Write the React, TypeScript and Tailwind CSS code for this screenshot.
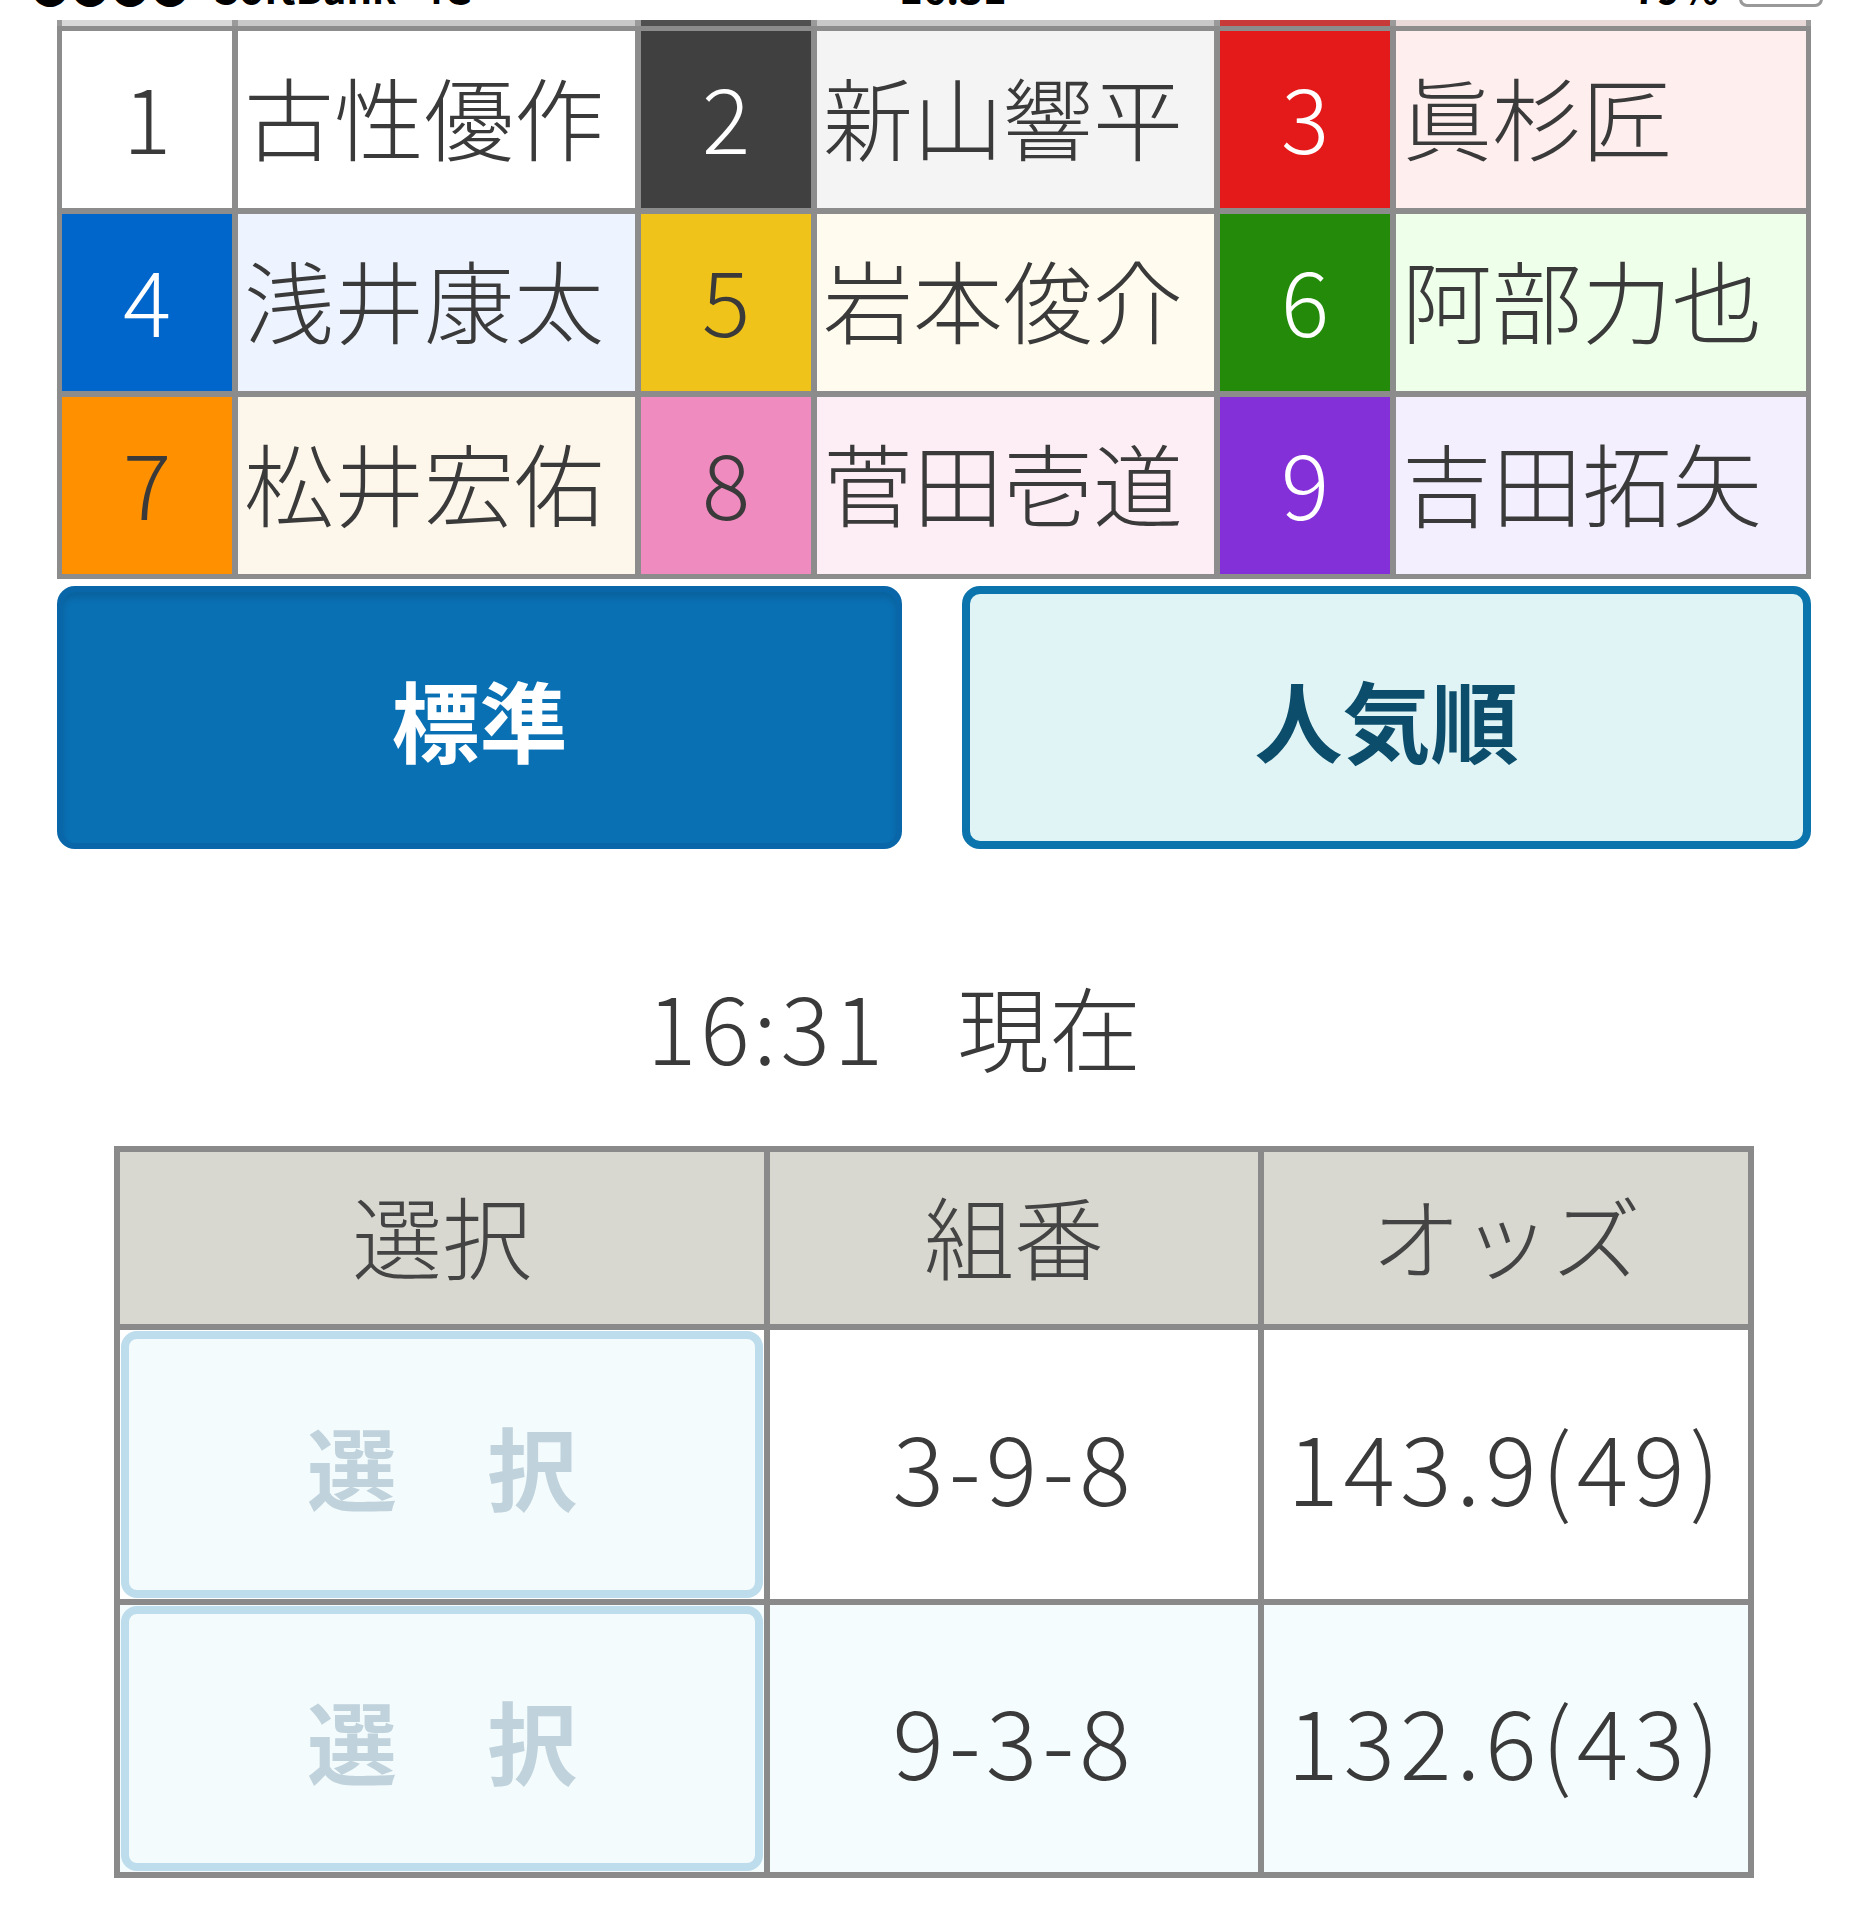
import React from "react";

type Racer = { no: string; name: string; numCls: string; nameCls: string };

const racers: Racer[] = [
  { no: "1", name: "古性優作", numCls: "bg-white text-[#3a3a3a]", nameCls: "bg-white" },
  { no: "2", name: "新山響平", numCls: "bg-[#404040] text-white", nameCls: "bg-[#f4f4f4]" },
  { no: "3", name: "眞杉匠", numCls: "bg-[#e41a1a] text-white", nameCls: "bg-[#ffeeee]" },
  { no: "4", name: "浅井康太", numCls: "bg-[#0066cc] text-white", nameCls: "bg-[#eef4ff]" },
  { no: "5", name: "岩本俊介", numCls: "bg-[#f0c31a] text-[#3a3a3a]", nameCls: "bg-[#fffbee]" },
  { no: "6", name: "阿部力也", numCls: "bg-[#238a0a] text-white", nameCls: "bg-[#eeffea]" },
  { no: "7", name: "松井宏佑", numCls: "bg-[#ff9100] text-[#3a3a3a]", nameCls: "bg-[#fdf6ea]" },
  { no: "8", name: "菅田壱道", numCls: "bg-[#f08bbf] text-[#3a3a3a]", nameCls: "bg-[#fdeef6]" },
  { no: "9", name: "吉田拓矢", numCls: "bg-[#8430d9] text-white", nameCls: "bg-[#f4effe]" },
];

const odds = [
  { combo: "3-9-8", odds: "143.9(49)", rowCls: "bg-white" },
  { combo: "9-3-8", odds: "132.6(43)", rowCls: "bg-[#f5fcfd]" },
];

const font = { fontFamily: '"Noto Sans CJK JP", "Noto Sans", sans-serif' };

function SelectButton() {
  return (
    <div className="h-full w-full p-[1px]">
      <div className="flex h-full w-full items-center justify-center rounded-[16px] border-[8px] border-[#bddcec] bg-[#f4fbfd] text-[90px] font-bold leading-none text-[#c0d3dc]">
        選　択
      </div>
    </div>
  );
}

export default function App() {
  return (
    <div className="min-h-[1920px] w-[1868px] overflow-hidden bg-white" style={font}>
      {/* status bar remnants */}
      <div className="h-[20px] overflow-hidden">
        <div className="-mt-[33px] flex items-start justify-between pl-[30px] pr-[45px] text-[40px] font-semibold leading-[40px] text-black">
          <div className="flex gap-[24px]">
            <span>●●●●</span>
            <span>SoftBank</span>
            <span>4G</span>
          </div>
          <span className="-ml-[200px]">16:31</span>
          <div className="flex items-start gap-[20px]">
            <span>79%</span>
            <div className="mt-[4px] h-[36px] w-[84px] rounded-[8px] border-[3px] border-[#999]" />
          </div>
        </div>
      </div>

      {/* previous row remnant */}
      <div className="mx-[57px] grid h-[6px] grid-cols-[5px_170px_6px_397px_6px_170px_6px_397px_6px_170px_6px_1fr_5px] bg-[#9a9a9a]">
        <div />
        <div className="bg-[#d8d8d8]" />
        <div />
        <div className="bg-[#c8c8c8]" />
        <div />
        <div className="bg-[#505050]" />
        <div />
        <div className="bg-[#c8c8c8]" />
        <div />
        <div className="bg-[#c83a3a]" />
        <div />
        <div className="bg-[#e8d8d8]" />
        <div />
      </div>

      {/* racer table */}
      <div className="mx-[57px] grid grid-cols-[170px_397px_170px_397px_170px_1fr] gap-[6px] bg-[#8c8c8c] p-[5px]">
        {racers.map((r) => (
          <React.Fragment key={r.no}>
            <div
              className={`flex h-[177px] items-center justify-center pb-[10px] text-[90px] font-light leading-none ${r.numCls}`}
            >
              {r.no}
            </div>
            <div
              className={`flex h-[177px] items-center pb-[10px] pl-[6px] text-[90px] font-light leading-none text-[#3a3a3a] ${r.nameCls}`}
            >
              {r.name}
            </div>
          </React.Fragment>
        ))}
      </div>

      {/* sort buttons */}
      <div className="mx-[57px] mt-[7px] flex gap-[60px]">
        <div className="flex h-[263px] flex-1 items-center justify-center rounded-[18px] border-[6px] border-[#0966a8] bg-[#0a70b4] text-[88px] font-bold leading-none text-white shadow-[inset_0_6px_6px_rgba(0,0,0,0.12)]">
          標準
        </div>
        <div className="flex h-[263px] flex-1 items-center justify-center rounded-[18px] border-[8px] border-[#0b74ac] bg-[#e0f4f5] text-[88px] font-bold leading-none text-[#0b4d6b]">
          人気順
        </div>
      </div>

      {/* time */}
      <div className="pr-[80px] pt-[126px] text-center text-[92px] font-light leading-[100px] text-[#3a3a3a]">
        <span className="tracking-[4px]">16:31</span>
        <span className="ml-[70px]">現在</span>
      </div>

      {/* odds table */}
      <div className="mx-auto mt-[71px] grid w-[1640px] grid-cols-[644px_488px_484px] gap-[6px] bg-[#8a8a8a] p-[6px]">
        <div className="flex h-[172px] items-center justify-center pb-[8px] bg-[#d8d8d0] text-[90px] font-light leading-none text-[#444]">
          選択
        </div>
        <div className="flex h-[172px] items-center justify-center pb-[8px] bg-[#d8d8d0] text-[90px] font-light leading-none text-[#444]">
          組番
        </div>
        <div className="flex h-[172px] items-center justify-center pb-[8px] bg-[#d8d8d0] text-[90px] font-light leading-none text-[#444]">
          オッズ
        </div>
        {odds.map((o, i) => (
          <React.Fragment key={o.combo}>
            <div className={`${i === 0 ? "h-[269px]" : "h-[267px]"} ${o.rowCls}`}>
              <SelectButton />
            </div>
            <div
              className={`flex items-center justify-center text-[96px] font-light leading-none tracking-[5px] text-[#3a3a3a] ${o.rowCls}`}
            >
              {o.combo}
            </div>
            <div
              className={`flex items-center justify-center text-[96px] font-light leading-none tracking-[5px] text-[#3a3a3a] ${o.rowCls}`}
            >
              {o.odds}
            </div>
          </React.Fragment>
        ))}
      </div>
    </div>
  );
}
